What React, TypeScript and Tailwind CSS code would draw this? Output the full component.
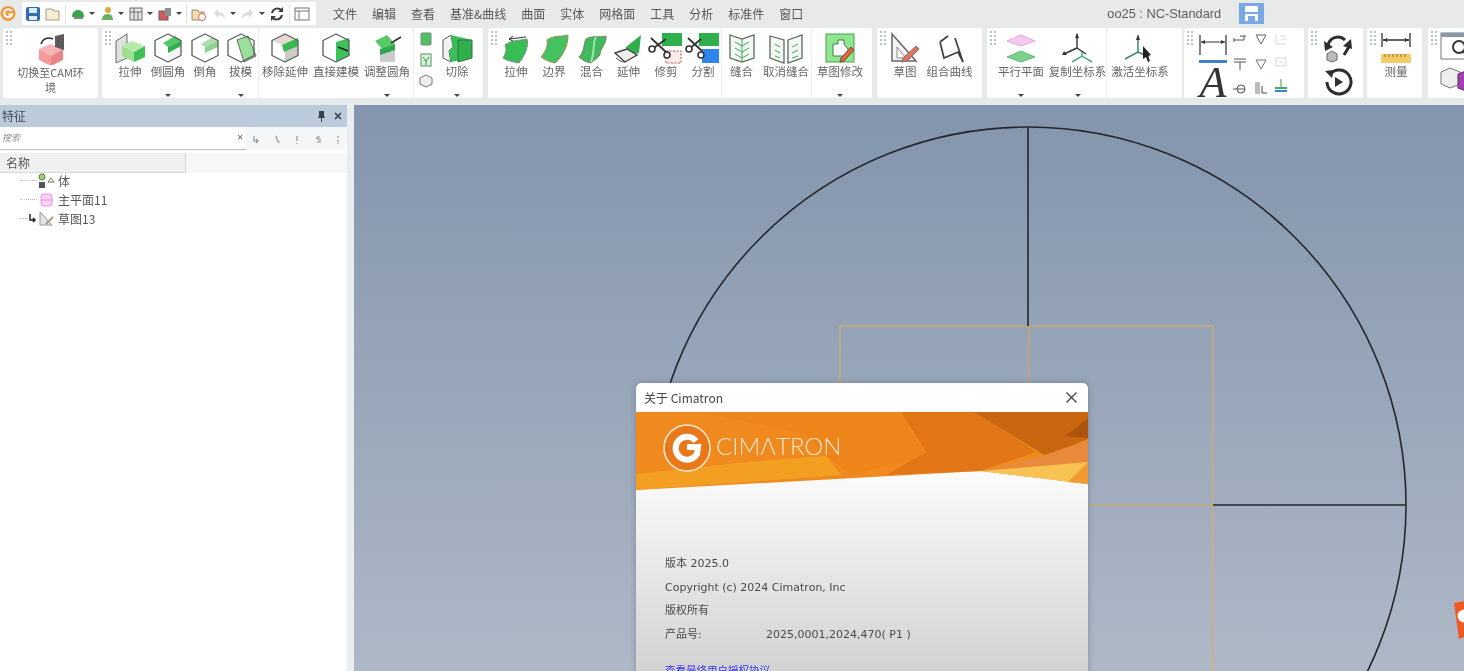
import type { ReactNode } from 'react';

const cjk = { fontFamily: '"Noto Sans CJK SC", "Liberation Sans", sans-serif' };

function Ic({ children, w = 32, h = 32 }: { children: ReactNode; w?: number; h?: number }) {
  return (
    <svg width={w} height={h} viewBox={`0 0 ${w} ${h}`} fill="none" className="shrink-0">
      {children}
    </svg>
  );
}

function Cube({ top = '#fff', left = '#fff', right = '#fff', children }: { top?: string; left?: string; right?: string; children?: ReactNode }) {
  return (
    <Ic>
      <path d="M16 2 29 8.5 16 15 3 8.5Z" fill={top} />
      <path d="M3 8.5 16 15V30L3 23.5Z" fill={left} />
      <path d="M29 8.5 16 15V30L29 23.5Z" fill={right} />
      {children}
      <path d="M16 2 29 8.5V23.5L16 30 3 23.5V8.5Z" stroke="#5b5f5e" strokeWidth="1.3" strokeLinejoin="round" />
    </Ic>
  );
}

const icons: Record<string, ReactNode> = {
  extrude: (
    <Ic>
      <path d="M2 9 13 2V26L2 31Z" fill="#dfe2df" stroke="#6b6e6c" />
      <path d="M8 14 18 9 31 14 20 20Z" fill="#b6eba9" />
      <path d="M8 14 20 20V30L8 24Z" fill="#9ee08f" />
      <path d="M20 20 31 14V25L20 30Z" fill="#3fbf56" />
    </Ic>
  ),
  fillet: (
    <Cube right="#f4f4f4">
      <path d="M16 15 29 8.5 23 4 11 11Z" fill="#54c866" />
      <path d="M16 15 29 8.5V14L16 21Z" fill="#2fb04c" />
    </Cube>
  ),
  chamfer: (
    <Cube>
      <path d="M16 15 29 8.5 24 5 12 12Z" fill="#a9dfa8" />
      <path d="M16 15 29 8.5V15L16 21Z" fill="#8ed391" />
    </Cube>
  ),
  draft: (
    <Cube>
      <path d="M12 8 23 4 31 24 19 30Z" fill="#98e09b" stroke="#6b6e6c" />
    </Cube>
  ),
  moveFace: (
    <Cube left="#fff" right="#cfcac6" top="#e7d8d2">
      <path d="M13 13 29 6V14L15 20Z" fill="#3cb850" />
    </Cube>
  ),
  direct: (
    <Cube>
      <path d="M16 10 29 6V24L16 30Z" fill="#3bc25a" />
      <path d="M18 15 28 19" stroke="#222" strokeWidth="1.6" />
    </Cube>
  ),
  adjust: (
    <Ic>
      <path d="M4 9 16 3 24 12 12 18Z" fill="#56c968" />
      <path d="M9 17 24 12V30H9Z" fill="#c9ccca" />
      <path d="M9 17 24 12V18L9 23Z" fill="#2fa84c" />
      <path d="M20 11 30 5" stroke="#333" strokeWidth="1.6" />
    </Ic>
  ),
  cut: (
    <Ic>
      <path d="M2 8 10 3 12 15 8 19 10 30 2 26Z" fill="#f2f2f2" stroke="#5b5f5e" />
      <path d="M10 3 31 8V26L10 30 8 19 12 15Z" fill="#36c057" />
      <path d="M17 8 31 8V26L17 30Z" fill="#2fb04c" stroke="#3c6e47" />
    </Ic>
  ),
  sExtrude: (
    <Ic>
      <path d="M5 13C12 8 17 9 27 7 29 14 25 23 19 31 13 30 8 29 3 26 6 21 7 17 5 13Z" fill="#36bd55" stroke="#7b8d7c" />
      <path d="M9 7 26 5M9 7 13 4M9 7 13 9" stroke="#333" />
    </Ic>
  ),
  sBoundary: (
    <Ic>
      <path d="M9 8C16 3 23 5 30 3 30 14 25 24 17 31 12 30 7 28 3 25 8 19 10 14 9 8Z" fill="#44c25f" stroke="#9e8a5c" />
    </Ic>
  ),
  sBlend: (
    <Ic>
      <path d="M10 7C17 3 24 6 30 4 31 12 24 16 24 23 20 27 17 29 15 31 10 30 6 28 3 25 9 19 7 13 10 7Z" fill="#40b95c" stroke="#7f7f60" />
      <path d="M20 5C16 11 20 17 15 30" stroke="#9ee3a8" strokeWidth="2" />
    </Ic>
  ),
  sExtend: (
    <Ic>
      <path d="M13 15 28 3 26 21 13 24Z" fill="#2fb04c" />
      <path d="M2 21 14 17 24 23 12 30Z" fill="#eee" stroke="#444" strokeWidth="1.4" />
      <path d="M3 26C7 29 9 30 12 30" stroke="#444" />
    </Ic>
  ),
  trim: (
    <Ic w={36}>
      <rect x="14" y="1" width="20" height="13" fill="#2fb04c" />
      <rect x="18" y="19" width="15" height="12" fill="#fbeaea" stroke="#c64b4b" strokeDasharray="2 1.5" />
      <path d="M3 6 19 21M18 7 3 18" stroke="#333" strokeWidth="1.8" />
      <circle cx="4" cy="17" r="3" stroke="#333" strokeWidth="1.6" fill="#fff" />
      <circle cx="19" cy="23" r="3" stroke="#333" strokeWidth="1.6" fill="#fff" />
    </Ic>
  ),
  split: (
    <Ic w={36}>
      <rect x="14" y="1" width="20" height="13" fill="#2fb04c" />
      <rect x="17" y="17" width="17" height="14" fill="#2e86ea" />
      <path d="M3 6 17 19M16 7 3 18" stroke="#333" strokeWidth="1.8" />
      <circle cx="4" cy="17" r="3" stroke="#333" strokeWidth="1.6" fill="#fff" />
      <circle cx="16" cy="23" r="3" stroke="#333" strokeWidth="1.6" fill="#fff" />
    </Ic>
  ),
  sew: (
    <Ic>
      <path d="M4 3 16 7 28 3V26L16 30 4 26Z" fill="#f4f8f4" stroke="#5b6a5e" strokeWidth="1.3" />
      <path d="M16 7V30M9 10 16 14 23 10M9 16 16 20 23 16M9 22 16 26 23 22" stroke="#3ea85a" />
    </Ic>
  ),
  unsew: (
    <Ic w={36}>
      <path d="M2 4 16 8V31L2 26Z" fill="#f4f8f4" stroke="#5b6a5e" strokeWidth="1.3" />
      <path d="M20 8 34 3V26L20 31Z" fill="#f4f8f4" stroke="#5b6a5e" strokeWidth="1.3" />
      <path d="M7 12 12 15M7 18 12 21M7 24 12 26M24 15 30 12M24 21 30 18M24 26 30 24" stroke="#3ea85a" />
    </Ic>
  ),
  sketchEdit: (
    <Ic>
      <rect x="2" y="2" width="28" height="28" fill="#8ee78c" stroke="#4f9c5a" />
      <path d="M9 12H14V8H20V12L24 17V24H9Z" fill="#fff" stroke="#3f7f4c" />
      <path d="M17 26 27 15 30 18 20 29 16 30Z" fill="#e0683f" stroke="#6b4a35" />
    </Ic>
  ),
  sketch: (
    <Ic>
      <path d="M3 2 27 29H3Z" fill="#f4f4f4" stroke="#666" strokeWidth="1.5" />
      <path d="M8 15 17 26H8Z" fill="#fff" stroke="#888" />
      <path d="M14 26 27 14 30 17 18 29 13 30Z" fill="#e7725b" stroke="#777" />
    </Ic>
  ),
  curves: (
    <Ic>
      <path d="M6 10 14 4M6 10 10 26 24 20 29 30 21 6" stroke="#3f4240" strokeWidth="1.7" />
    </Ic>
  ),
  plane: (
    <Ic>
      <path d="M16 3 30 9 16 14 2 9Z" fill="#f7c9f2" stroke="#e3a9dc" />
      <path d="M16 19 30 25 16 30 2 25Z" fill="#7dd08c" stroke="#5fbd76" />
    </Ic>
  ),
  axes: (
    <Ic w={36}>
      <path d="M17 2V16M17 16 4 22M17 16 26 22" stroke="#333" strokeWidth="1.4" />
      <path d="M15 6 17 1 19 6ZM4 19 2 23 7 23Z" fill="#333" />
      <path d="M12 30 22 24 32 30M22 24V20" stroke="#4caf7c" strokeWidth="1.5" />
    </Ic>
  ),
  axesActive: (
    <Ic w={36}>
      <path d="M16 4V20M16 20 3 27M16 20 27 25" stroke="#3d8f68" strokeWidth="1.5" />
      <path d="M14 8 16 2 18 8Z" fill="#333" />
      <path d="M21 14 29 23 26 24 28 29 26 30 24 25 21 27Z" fill="#222" />
    </Ic>
  ),
  measure: (
    <Ic w={36}>
      <path d="M4 1V15M32 1V15M5 8H31" stroke="#333" strokeWidth="1.3" />
      <path d="M5 8 9 6V10ZM31 8 27 6V10Z" fill="#333" />
      <rect x="3" y="22" width="30" height="9" fill="#f2cc68" />
      <path d="M7 22V25M11 22V25M15 22V25M19 22V25M23 22V25M27 22V25" stroke="#8a6d2a" />
    </Ic>
  ),
};

function Dots() {
  return (
    <svg width="8" height="16" viewBox="0 0 8 16" className="absolute left-[3px] top-[2px]">
      {[1, 5, 9, 13].map(y => (
        <g key={y} fill="#b9c3cc">
          <rect x="0" y={y} width="2" height="2" />
          <rect x="4" y={y} width="2" height="2" />
        </g>
      ))}
    </svg>
  );
}

function Arrow() {
  return <span className="absolute bottom-[1px] left-1/2 h-0 w-0 -translate-x-1/2 border-x-[3px] border-t-[3px] border-x-transparent border-t-[#444]" />;
}

type Tool = { w: number; label: string; icon: string; arrow?: boolean; line?: boolean };

function Item({ w, label, icon, arrow, line }: Tool) {
  return (
    <div className={`relative flex h-full shrink-0 flex-col items-center pt-[4px] ${line ? 'border-r border-[#eeeeee]' : ''}`} style={{ width: w }}>
      {icons[icon]}
      <span className="whitespace-nowrap text-[11.5px] leading-[14px] text-[#666]" style={cjk}>
        {label}
      </span>
      {arrow && <Arrow />}
    </div>
  );
}

function Group({ w, ml, children }: { w: number; ml: number; children: ReactNode }) {
  return (
    <div className="relative flex h-[70px] shrink-0 rounded-[2px] bg-white" style={{ width: w, marginLeft: ml }}>
      <Dots />
      {children}
    </div>
  );
}

const solidTools: Tool[] = [
  { w: 38, label: '拉伸', icon: 'extrude' },
  { w: 38, label: '倒圆角', icon: 'fillet', arrow: true },
  { w: 36, label: '倒角', icon: 'chamfer' },
  { w: 36, label: '拔模', icon: 'draft', arrow: true, line: true },
  { w: 52, label: '移除延伸', icon: 'moveFace' },
  { w: 50, label: '直接建模', icon: 'direct' },
  { w: 53, label: '调整圆角', icon: 'adjust', arrow: true, line: true },
];

const surfaceTools: Tool[] = [
  { w: 38, label: '拉伸', icon: 'sExtrude' },
  { w: 38, label: '边界', icon: 'sBoundary' },
  { w: 37, label: '混合', icon: 'sBlend' },
  { w: 37, label: '延伸', icon: 'sExtend' },
  { w: 38, label: '修剪', icon: 'trim' },
  { w: 37, label: '分割', icon: 'split', line: true },
  { w: 39, label: '缝合', icon: 'sew' },
  { w: 51, label: '取消缝合', icon: 'unsew', line: true },
  { w: 56, label: '草图修改', icon: 'sketchEdit', arrow: true },
];

const menus = ['文件', '编辑', '查看', '基准&曲线', '曲面', '实体', '网格面', '工具', '分析', '标准件', '窗口'];

function QuickIcon({ children, arrow }: { children: ReactNode; arrow?: boolean }) {
  return (
    <div className="flex shrink-0 items-center gap-[3px]">
      <svg width="16" height="16" viewBox="0 0 16 16" fill="none">
        {children}
      </svg>
      {arrow && <span className="h-0 w-0 border-x-[3px] border-t-[3px] border-x-transparent border-t-[#444]" />}
    </div>
  );
}

function TopBar() {
  return (
    <div className="flex h-[27px] items-center">
      <svg width="18" height="18" viewBox="0 0 18 18" className="shrink-0">
        <circle cx="8" cy="8.5" r="7.5" fill="#f19a3e" />
        <path d="M11.5 6A4 4 0 1 0 12 9.5H8.5" stroke="#fff" strokeWidth="2" fill="none" />
      </svg>
      <div className="ml-[4px] flex h-[23px] w-[294px] shrink-0 items-center gap-[4px] bg-white pl-[3px]">
        <QuickIcon>
          <rect x="1" y="1" width="14" height="14" rx="2" fill="#2f6eb0" />
          <rect x="4" y="2" width="8" height="5" fill="#dfeaf4" />
          <rect x="4" y="10" width="8" height="4" fill="#dfeaf4" />
        </QuickIcon>
        <QuickIcon>
          <path d="M1 3H7L9 5H14V14H1Z" fill="#f6edd2" stroke="#a69a7a" />
        </QuickIcon>
        <span className="h-[20px] w-px shrink-0 bg-[#e3e3e3]" />
        <QuickIcon arrow>
          <path d="M2 11C2 6 5 4 8 4S14 6 14 11Z" fill="#38a54e" />
          <rect x="4" y="11" width="9" height="2" fill="#7f8f80" />
        </QuickIcon>
        <QuickIcon arrow>
          <circle cx="9" cy="4" r="3" fill="#e3a63b" />
          <path d="M3 14C3 9 6 8 9 8S14 10 14 14Z" fill="#67b25e" />
        </QuickIcon>
        <QuickIcon arrow>
          <rect x="2" y="2" width="12" height="12" fill="#e6e6e6" stroke="#6d6d6d" />
          <path d="M2 6H14M6 2V14M10 6V14" stroke="#6d6d6d" />
        </QuickIcon>
        <QuickIcon arrow>
          <rect x="2" y="5" width="9" height="9" fill="#cf5b5b" stroke="#6d5d5d" />
          <rect x="8" y="2" width="6" height="8" fill="#8a8f8f" />
        </QuickIcon>
        <span className="h-[20px] w-px shrink-0 bg-[#e3e3e3]" />
        <QuickIcon>
          <path d="M1 4H6L8 6H13V14H1Z" fill="#f1dcb4" stroke="#a28a62" />
          <circle cx="11" cy="11" r="3.5" fill="#fff" stroke="#d1694b" />
        </QuickIcon>
        <QuickIcon arrow>
          <path d="M3 7 7 3V6C11 6 14 8 14 13 12 10 10 9 7 9V12Z" fill="#d9dcdc" />
        </QuickIcon>
        <QuickIcon arrow>
          <path d="M13 7 9 3V6C5 6 2 8 2 13 4 10 6 9 9 9V12Z" fill="#d9dcdc" />
        </QuickIcon>
        <QuickIcon>
          <path d="M3 7A5.5 5.5 0 0 1 13 5M13 9A5.5 5.5 0 0 1 3 11" stroke="#3d3d3d" strokeWidth="2" />
          <path d="M14 1V6H9ZM2 15V10H7Z" fill="#3d3d3d" />
        </QuickIcon>
        <span className="h-[20px] w-px shrink-0 bg-[#e3e3e3]" />
        <QuickIcon>
          <rect x="1" y="2" width="14" height="12" fill="#fff" stroke="#6d7478" />
          <path d="M1 5H15M5 5V14" stroke="#6d7478" />
        </QuickIcon>
      </div>
      <nav className="ml-[17px] flex shrink-0 gap-[15px] text-[12px] text-[#555]" style={cjk}>
        {menus.map(m => (
          <span key={m}>{m}</span>
        ))}
      </nav>
      <span className="ml-[304px] whitespace-nowrap text-[12.8px] text-[#5c5c5c]" style={{ fontFamily: '"Liberation Sans", sans-serif' }}>
        oo25 : NC-Standard
      </span>
      <svg width="25" height="21" viewBox="0 0 25 21" className="ml-[18px] shrink-0">
        <rect width="25" height="21" fill="#78a8e6" />
        <rect x="6" y="3" width="13" height="15" fill="#fff" />
        <rect x="6" y="9" width="13" height="2" fill="#78a8e6" />
        <rect x="9" y="13" width="7" height="5" fill="#78a8e6" />
      </svg>
    </div>
  );
}

function SmallTool({ children }: { children: ReactNode }) {
  return (
    <svg width="16" height="16" viewBox="0 0 16 16" fill="none">
      {children}
    </svg>
  );
}

function Ribbon() {
  return (
    <div className="mt-[1px] flex h-[76px] w-[1464px] overflow-hidden pl-[3px]">
      <Group w={95} ml={0}>
        <div className="flex w-full flex-col items-center pt-[5px]">
          <Ic>
            <path d="M4 16 15 11 28 16 16 23Z" fill="#f6b5b5" />
            <path d="M4 16 16 23V33L4 27Z" fill="#f49a9a" />
            <path d="M28 16 16 23V33L28 27Z" fill="#e98585" />
            <path d="M20 3 29 1V17L20 14Z" fill="#5d5b5e" />
            <path d="M6 11C8 5 13 4 18 6" stroke="#333" strokeWidth="1.6" />
          </Ic>
          <span className="w-[74px] break-all text-center text-[11px] leading-[15px] text-[#666]" style={cjk}>
            切换至CAM环境
          </span>
        </div>
      </Group>
      <Group w={381} ml={4}>
        <div className="flex pl-[9px]">
          {solidTools.map(t => (
            <Item key={t.label} {...t} />
          ))}
          <div className="flex w-[23px] flex-col items-center gap-[5px] pt-[3px]">
            <SmallTool>
              <rect x="3" y="2" width="10" height="12" rx="1" fill="#4fbf66" stroke="#7a8a7c" />
            </SmallTool>
            <SmallTool>
              <rect x="3" y="2" width="10" height="12" fill="#d9f3d9" stroke="#5f8f68" />
              <path d="M5 5 8 9 11 5M8 9V13" stroke="#2f8a45" />
            </SmallTool>
            <SmallTool>
              <path d="M8 2 14 5V11L8 14 2 11V5Z" fill="#eee" stroke="#777" />
            </SmallTool>
          </div>
          <Item w={40} label="切除" icon="cut" arrow />
        </div>
      </Group>
      <Group w={384} ml={5}>
        <div className="flex pl-[9px]">
          {surfaceTools.map(t => (
            <Item key={t.label + t.icon} {...t} />
          ))}
        </div>
      </Group>
      <Group w={105} ml={5}>
        <div className="flex pl-[9px]">
          <Item w={38} label="草图" icon="sketch" />
          <Item w={51} label="组合曲线" icon="curves" />
        </div>
      </Group>
      <Group w={195} ml={5}>
        <div className="flex pl-[6px]">
          <Item w={56} label="平行平面" icon="plane" arrow />
          <Item w={58} label="复制坐标系" icon="axes" arrow line />
          <Item w={66} label="激活坐标系" icon="axesActive" />
        </div>
      </Group>
      <Group w={120} ml={2}>
        <div className="flex w-full pl-[13px]">
          <div className="flex w-[32px] flex-col items-center pt-[5px]">
            <svg width="30" height="31" viewBox="0 0 30 31" fill="none" className="shrink-0">
              <path d="M2 2V22M28 2V22M3 9H27" stroke="#333" strokeWidth="1.2" />
              <path d="M3 9 7 7V11ZM27 9 23 7V11Z" fill="#333" />
              <rect x="1" y="27" width="28" height="3" fill="#3f80c8" />
            </svg>
            <span className="mt-[2px] text-[44px] leading-[34px] text-[#333]" style={{ fontFamily: '"Liberation Serif", serif', fontStyle: 'italic' }}>
              A
            </span>
          </div>
          <div className="ml-[3px] grid grid-cols-2 gap-x-[5px] gap-y-[7px] pt-[3px]">
            <SmallTool><path d="M2 9H12M2 7V11M12 5V9M8 5H14" stroke="#555" /></SmallTool>
            <SmallTool><path d="M3 4H13L8 13Z" stroke="#666" /></SmallTool>
            <SmallTool><path d="M2 3H14M2 6H14M8 6V14" stroke="#555" /></SmallTool>
            <SmallTool><path d="M3 4H13L8 13Z" stroke="#777" /></SmallTool>
            <SmallTool><circle cx="9" cy="9" r="4" stroke="#555" /><path d="M1 9H13" stroke="#555" /></SmallTool>
            <SmallTool><rect x="2" y="2" width="5" height="12" fill="#bbb" /><path d="M9 6V13H14" stroke="#444" /></SmallTool>
          </div>
          <div className="ml-[4px] flex flex-col gap-[7px] pt-[3px]">
            <SmallTool><path d="M3 3V13H13M7 5H13M9 8H13" stroke="#d4d8d8" /></SmallTool>
            <SmallTool><path d="M3 4H13V12H3ZM6 8H10" stroke="#d4d8d8" /></SmallTool>
            <SmallTool><path d="M8 2V10" stroke="#4a8a5a" /><rect x="2" y="10" width="12" height="2" fill="#3fae6a" /><rect x="2" y="13" width="12" height="2" fill="#3f80c8" /></SmallTool>
          </div>
        </div>
      </Group>
      <Group w={55} ml={4}>
        <div className="flex w-full flex-col items-center gap-[4px] pl-[4px] pt-[5px]">
          <svg width="30" height="30" viewBox="0 0 30 30" fill="none">
            <path d="M5 13A10 10 0 0 1 22 7M27 12 21 22" stroke="#2e2e2e" strokeWidth="3" />
            <path d="M1 8 10 14 2 18ZM28 6 29 16 20 13Z" fill="#2e2e2e" />
            <path d="M9 18 14 21V27L9 29 4 27V21Z" fill="#bbb" stroke="#666" />
          </svg>
          <svg width="30" height="30" viewBox="0 0 30 30" fill="none">
            <path d="M7 7A12 12 0 1 1 4 15" stroke="#2e2e2e" strokeWidth="3" />
            <path d="M2 4 11 3 9 11Z" fill="#2e2e2e" />
            <path d="M12 10 20 15 12 20Z" fill="#2e2e2e" />
          </svg>
        </div>
      </Group>
      <Group w={55} ml={4}>
        <div className="flex pl-[9px]">
          <Item w={40} label="测量" icon="measure" />
        </div>
      </Group>
      <Group w={40} ml={6}>
        <div className="flex flex-col gap-[4px] pl-[12px] pt-[4px]">
          <svg width="34" height="30" viewBox="0 0 34 30" fill="none">
            <rect x="1" y="1" width="32" height="26" fill="#fff" stroke="#777" />
            <rect x="1" y="1" width="32" height="4" fill="#8a99aa" />
            <circle cx="19" cy="15" r="6" stroke="#333" strokeWidth="2" />
            <path d="M23 19 27 24" stroke="#333" strokeWidth="2" />
          </svg>
          <svg width="34" height="26" viewBox="0 0 34 26" fill="none">
            <path d="M10 2 20 6V18L10 22 1 18V6Z" fill="#eee" stroke="#777" />
            <path d="M18 8 26 5 34 8V22L26 25 18 22Z" fill="#a23fb5" stroke="#5d2a66" />
          </svg>
        </div>
      </Group>
    </div>
  );
}

function FeaturePanel() {
  return (
    <aside className="w-[347px] shrink-0 bg-white" style={cjk}>
      <div className="flex h-[22px] items-center justify-between bg-[#bccbdb] pl-[2px] pr-[5px]">
        <span className="text-[12px] text-[#3e4a55]">特征</span>
        <div className="flex items-center gap-[8px]">
          <svg width="9" height="12" viewBox="0 0 9 12">
            <path d="M2 1H7V6L8 8H1L2 6ZM4 8H5V12H4Z" fill="#3a4048" />
          </svg>
          <svg width="8" height="8" viewBox="0 0 8 8">
            <path d="M1 1 7 7M7 1 1 7" stroke="#3a4048" strokeWidth="1.6" />
          </svg>
        </div>
      </div>
      <div className="flex h-[23px] bg-[#f4f6f7]">
        <div className="flex w-[246px] items-center justify-between border-b border-[#bdbdbd] bg-white pl-[2px] pr-[3px]">
          <span className="text-[9px] italic text-[#8a8a8a]">搜索</span>
          <span className="text-[10px] leading-none text-[#555]" style={{ fontFamily: '"Liberation Sans", sans-serif' }}>×</span>
        </div>
        <div className="flex flex-1 items-center gap-[12.5px] pl-[6px] pt-[2px]">
          {['M2 2V7H6M4 5 6 7 4 9', 'M3 2 5 8H7', 'M4 2V7M4 9V10', 'M6 3H3V5H6V8H3', 'M4 2V4M4 6V8M4 9V10'].map(d => (
            <svg key={d} width="8" height="11" viewBox="0 0 8 11" fill="none">
              <path d={d} stroke="#8f9696" strokeWidth="1.2" />
            </svg>
          ))}
        </div>
      </div>
      <div className="mt-[3px] flex h-[20px] bg-[#f7f7f7]">
        <div className="flex w-[186px] items-center border-b border-r border-[#d8d8d8] bg-[#f0f0f0] pl-[6px] text-[12px] text-[#555]">名称</div>
      </div>
      <div className="-mt-[2px] pl-[20px] text-[12px] text-[#555]">
        <div className="flex h-[19px] items-center">
          <span className="w-[17px] border-b border-dotted border-[#bbb]" />
          <svg width="19" height="16" viewBox="0 0 19 16" fill="none" className="mr-[2px]">
            <circle cx="5" cy="4" r="3" fill="#a9cf7a" stroke="#5d7f3e" />
            <rect x="2" y="9" width="6" height="6" fill="#555" />
            <path d="M11 9 14 5 17 9Z" stroke="#6d7d3e" />
          </svg>
          <span>体</span>
        </div>
        <div className="flex h-[19px] items-center">
          <span className="w-[17px] border-b border-dotted border-[#bbb]" />
          <svg width="19" height="16" viewBox="0 0 19 16" fill="none" className="mr-[2px]">
            <rect x="4" y="2" width="11" height="12" rx="3" fill="#fbd3f5" stroke="#f28be4" />
            <path d="M4 8H15" stroke="#f28be4" />
          </svg>
          <span>主平面11</span>
        </div>
        <div className="flex h-[19px] items-center">
          <span className="w-[8px] border-b border-dotted border-[#bbb]" />
          <svg width="9" height="11" viewBox="0 0 9 11" fill="none">
            <path d="M2 1V7H7M5 5 7 7 5 9" stroke="#222" strokeWidth="1.5" />
          </svg>
          <svg width="19" height="16" viewBox="0 0 19 16" fill="none" className="mr-[2px]">
            <path d="M3 1 15 14H3Z" fill="#e3e3e3" stroke="#999" />
            <path d="M9 13 16 6" stroke="#a99a86" strokeWidth="2" />
          </svg>
          <span>草图13</span>
        </div>
      </div>
    </aside>
  );
}

function AboutDialog() {
  const text = { fontFamily: '"DejaVu Sans", "Noto Sans CJK SC", sans-serif' };
  return (
    <div className="absolute left-[282px] top-[278px] h-[340px] w-[452px] overflow-hidden rounded-t-[6px] bg-gradient-to-b from-[#fbfbfb] from-[26%] to-[#cfcfcf] to-[90%] shadow-[0_0_6px_rgba(60,70,90,0.35)]">
      <div className="flex h-[29px] items-center justify-between bg-white pl-[8px] pr-[10px] text-[12px] text-[#444]" style={cjk}>
        <span>关于 Cimatron</span>
        <svg width="13" height="13" viewBox="0 0 13 13">
          <path d="M1.5 1.5 11.5 11.5M11.5 1.5 1.5 11.5" stroke="#444" strokeWidth="1.4" />
        </svg>
      </div>
      <div className="relative h-[78px]">
        <svg width="452" height="78" viewBox="0 0 452 78" className="block">
          <path d="M0 0H452V72L344 59 0 78Z" fill="#f08a1e" />
          <path d="M60 0H265L290 45 215 62 190 45 170 22Z" fill="#ed851a" />
          <path d="M265 0H340L400 40 344 59 250 63 290 40Z" fill="#e27616" />
          <path d="M338 0H452V27L410 44Z" fill="#c9660f" />
          <path d="M430 24 452 6V26Z" fill="#ad530c" />
          <path d="M0 78V62L110 50 190 44 205 63Z" fill="#f3a022" />
          <path d="M344 59 400 46 452 28V50Z" fill="#e8893c" />
          <path d="M344 59 452 50V72Z" fill="#f8c352" />
          <path d="M432 70 452 50V72Z" fill="#f39a2e" />
          <circle cx="51" cy="36" r="23" fill="#e8781a" stroke="#fbe7d0" strokeWidth="1.6" />
          <path d="M60 29A11.5 11.5 0 1 0 61 42L62 35H51" stroke="#fff" strokeWidth="6" fill="none" />
        </svg>
        <span className="absolute left-[80px] top-[19px] text-[24px] font-light leading-[30px] text-[#fbe5cd]" style={{ fontFamily: 'Lato, sans-serif' }}>
          CIMΛTRON
        </span>
      </div>
      <div className="pl-[29px] pt-[62px] text-[11px] leading-[23.5px] text-[#4a4a4a]" style={text}>
        <div>版本 2025.0</div>
        <div>Copyright (c) 2024 Cimatron, Inc</div>
        <div>版权所有</div>
        <div className="flex">
          <span className="w-[101px]">产品号:</span>
          <span>2025,0001,2024,470( P1 )</span>
        </div>
        <div className="mt-[13px] text-[10.5px] text-[#3a3ae0]">查看最终用户授权协议</div>
      </div>
    </div>
  );
}

function Viewport() {
  return (
    <main className="relative flex-1 overflow-hidden bg-gradient-to-b from-[#8395ac] to-[#aeb8c7]">
      <svg width="1110" height="567" viewBox="354 104 1110 567" fill="none" className="absolute inset-0">
        <path d="M840 698V325H1213V698" stroke="#e0ad52" />
        <path d="M1029 325V504H1213" stroke="#d9a850" />
        <circle cx="1028" cy="504" r="378" stroke="#23272e" strokeWidth="1.6" />
        <path d="M1028 126V325M1213 504H1405" stroke="#23272e" strokeWidth="1.6" />
      </svg>
      <AboutDialog />
      <svg width="12" height="44" viewBox="0 0 12 44" className="absolute right-0 top-[494px]">
        <path d="M2 4 12 2V38L7 40Z" fill="#ef5a24" />
        <circle cx="12" cy="17" r="6.5" fill="#fff" />
      </svg>
    </main>
  );
}

export default function App() {
  return (
    <div className="flex h-[671px] w-[1464px] flex-col overflow-hidden bg-[#e8eaea] blur-[0.6px]">
      <TopBar />
      <Ribbon />
      <div className="mt-[1px] flex min-h-0 flex-1 gap-[7px] bg-[#e9edf0]">
        <FeaturePanel />
        <Viewport />
      </div>
    </div>
  );
}
